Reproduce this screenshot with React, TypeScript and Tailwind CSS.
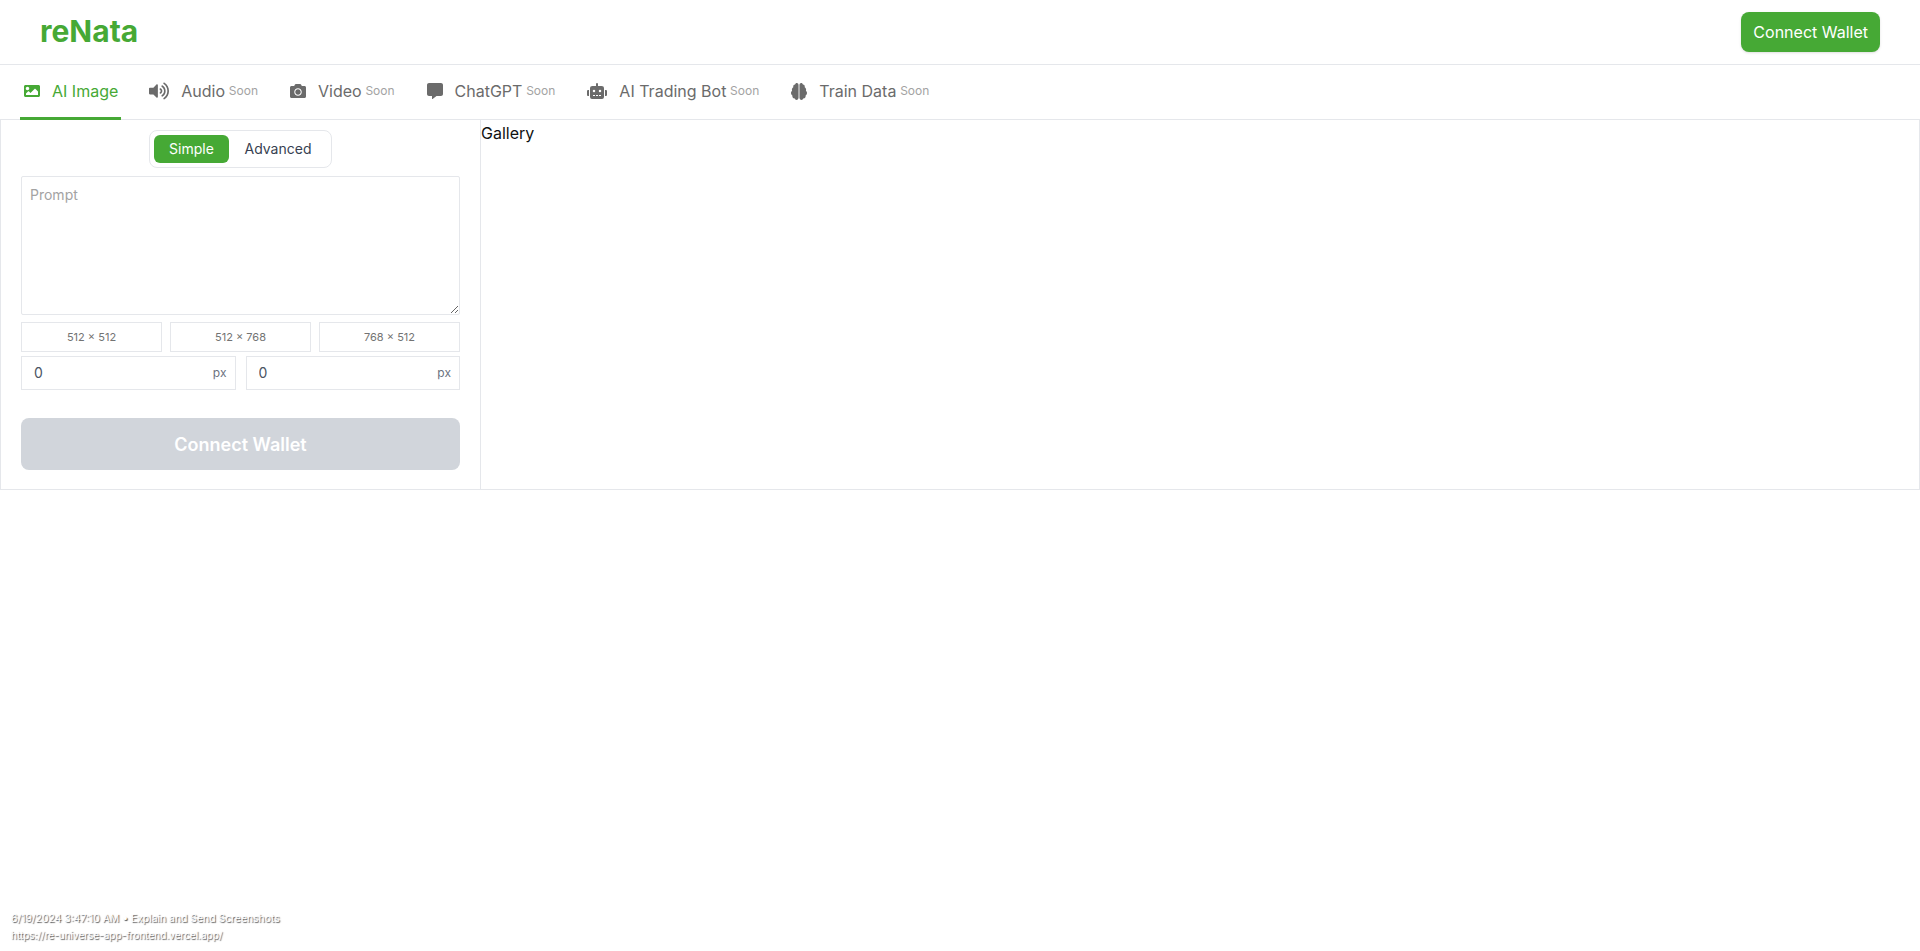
import React, { useState } from "react";
import { FaImage, FaVolumeUp, FaCamera, FaCommentAlt, FaRobot, FaBrain } from "react-icons/fa";

const font = { fontFamily: "Inter, sans-serif" };

const tabs = [
    { label: "AI Image", icon: FaImage, size: "h-[16px] w-[16px]", soon: false },
    { label: "Audio", icon: FaVolumeUp, size: "h-[18px] w-[20px]", soon: true },
    { label: "Video", icon: FaCamera, size: "h-[16px] w-[16px]", soon: true },
    { label: "ChatGPT", icon: FaCommentAlt, size: "h-[16px] w-[16px]", soon: true },
    { label: "AI Trading Bot", icon: FaRobot, size: "h-[16px] w-[20px]", soon: true },
    { label: "Train Data", icon: FaBrain, size: "h-[17px] w-[16px]", soon: true },
];

const sizes = ["512 × 512", "512 × 768", "768 × 512"];

const SizeInput = () => (
    <div className="flex h-[34px] flex-1 items-center justify-between border border-gray-200 pl-[12px] pr-[8px]">
        <input
            defaultValue="0"
            className="w-[100px] bg-transparent text-sm text-[#4b5563] outline-none"
        />
        <span className="text-xs text-[#6b7280]">px</span>
    </div>
);

const App = () => {
    const [mode, setMode] = useState("simple");

    return (
        <div className="relative h-[951px] w-full bg-white text-black" style={font}>
            <header className="flex h-[65px] items-center justify-between border-b border-gray-200 px-[40px]">
                <h1 className="pb-[2px] text-3xl font-bold text-[#46a935]">reNata</h1>
                <button className="h-[40px] rounded-lg bg-[#46a935] px-3 text-base text-white shadow-sm">
                    Connect Wallet
                </button>
            </header>

            <nav className="flex h-[55px] gap-[24px] border-b border-gray-200 pl-[20px]">
                {tabs.map((tab) => {
                    const Icon = tab.icon;
                    return (
                        <div
                            key={tab.label}
                            className={
                                tab.soon
                                    ? "flex h-[54px] items-center px-[4px] pb-[2px] text-[#6b6b6b]"
                                    : "flex h-[55px] items-center border-b-[3px] border-[#46a935] pl-[4px] pr-[3px] text-[#46a935]"
                            }
                        >
                            <Icon className={`mr-[12px] ${tab.size}`} preserveAspectRatio="none" />
                            <span className="text-base">{tab.label}</span>
                            {tab.soon && (
                                <span className="ml-[3.75px] text-xs text-[#a3a3a3]">Soon</span>
                            )}
                        </div>
                    );
                })}
            </nav>

            <main className="flex h-[370px] border-x border-b border-gray-200">
                <section className="flex w-[480px] flex-col border-r border-gray-200 px-[20px] pt-[10px]">
                    <div className="mx-auto flex h-[38px] w-[183px] items-center rounded-lg border border-gray-200 px-[4px]">
                        <button
                            onClick={() => setMode("simple")}
                            className={
                                mode === "simple"
                                    ? "h-[28px] w-[75px] rounded-md bg-[#46a935] text-sm text-white"
                                    : "h-[28px] w-[75px] rounded-md text-sm text-[#374151]"
                            }
                        >
                            Simple
                        </button>
                        <button
                            onClick={() => setMode("advanced")}
                            className={
                                mode === "advanced"
                                    ? "h-[28px] w-[98px] rounded-md bg-[#46a935] text-sm text-white"
                                    : "h-[28px] w-[98px] rounded-md text-sm text-[#374151]"
                            }
                        >
                            Advanced
                        </button>
                    </div>

                    <textarea
                        placeholder="Prompt"
                        className="mt-[8px] h-[139px] w-full rounded-[2px] border border-gray-200 px-[8px] py-[8px] text-sm outline-none placeholder:text-[#a3a3a3]"
                    />

                    <div className="mt-[7px] grid grid-cols-3 gap-[8px]">
                        {sizes.map((size) => (
                            <button
                                key={size}
                                className="h-[30px] border border-gray-200 text-[11px] text-[#737373]"
                            >
                                {size}
                            </button>
                        ))}
                    </div>

                    <div className="mt-[4px] flex gap-[10px]">
                        <SizeInput />
                        <SizeInput />
                    </div>

                    <button
                        disabled
                        className="mt-[28px] h-[52px] w-full rounded-lg bg-[#d1d5db] pt-[1px] text-lg font-semibold text-white"
                    >
                        Connect Wallet
                    </button>
                </section>
                <section className="flex-1 pt-[1px] text-base text-[#111]">Gallery</section>
            </main>

            <div className="absolute left-[11px] top-[911px] leading-[16px] text-white [text-shadow:1px_1px_1px_#555]">
                <div className="text-[10.4px]">6/19/2024 3:47:10 AM • Explain and Send Screenshots</div>
                <div className="text-[10px]">https://re-universe-app-frontend.vercel.app/</div>
            </div>
        </div>
    );
};

export default App;
